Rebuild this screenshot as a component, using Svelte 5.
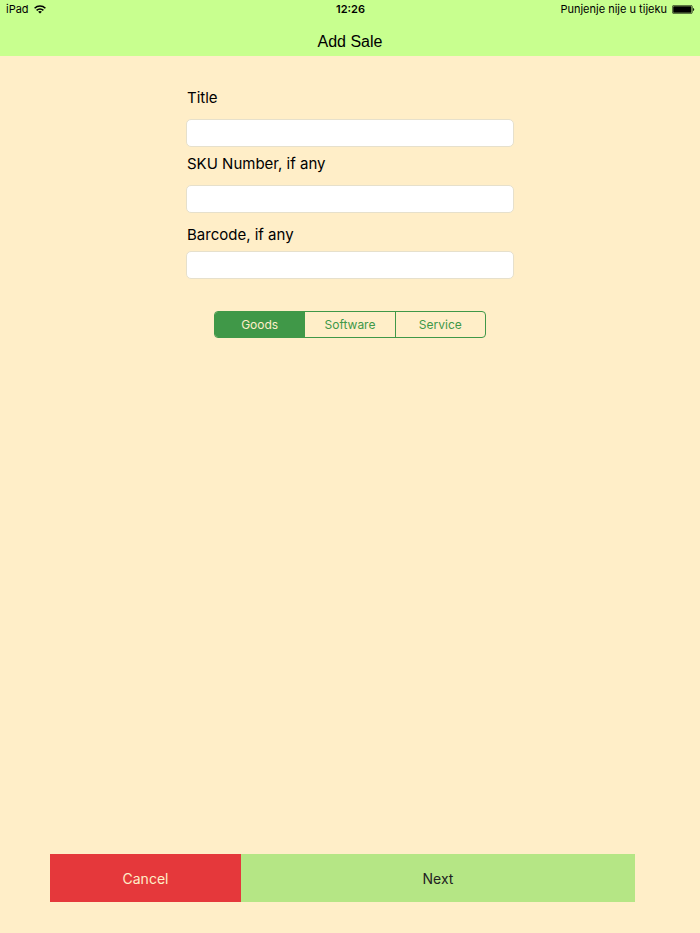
<script>
  const types = ['Goods', 'Software', 'Service']
  let selected = $state('Goods')
  let title = $state('')
  let sku = $state('')
  let barcode = $state('')

  function reset() {
    title = ''
    sku = ''
    barcode = ''
    selected = 'Goods'
  }
</script>

<div class="page">
  <header>
    <div class="status">
      <div class="left">
        <span>iPad</span>
        <svg width="12" height="9" viewBox="0 0 12 9" fill="none" stroke="#000" stroke-width="1.5" aria-hidden="true">
          <path d="M.6 3.3C3.6.3 8.4.3 11.4 3.3" />
          <path d="M2.6 5.4c1.9-1.9 4.9-1.9 6.8 0" />
          <path d="M6 8.6 4.1 6.7c1.1-1 2.7-1 3.8 0z" fill="#000" stroke="none" />
        </svg>
      </div>
      <div class="time">12:26</div>
      <div class="right">
        <span>Punjenje nije u tijeku</span>
        <svg width="23" height="9" viewBox="0 0 23 9" aria-hidden="true">
          <rect x=".4" y=".4" width="19.9" height="8.2" rx="1.4" fill="none" stroke="#000" stroke-width=".6" />
          <rect x="1.2" y="1.2" width="18.2" height="6.6" rx=".6" />
          <path d="M21.1 2.9c1.5.3 1.5 2.9 0 3.2z" />
        </svg>
      </div>
    </div>
    <h1>Add Sale</h1>
  </header>

  <main>
    <div class="field">
      <label for="title">Title</label>
      <input id="title" type="text" bind:value={title} />
    </div>
    <div class="field">
      <label for="sku">SKU Number, if any</label>
      <input id="sku" type="text" bind:value={sku} />
    </div>
    <div class="field low">
      <label for="barcode">Barcode, if any</label>
      <input id="barcode" type="text" bind:value={barcode} />
    </div>
    <div class="segments" role="group" aria-label="Sale type">
      {#each types as type}
        <button type="button" class:active={selected === type} aria-pressed={selected === type} onclick={() => selected = type}>{type}</button>
      {/each}
    </div>
  </main>

  <footer>
    <button type="button" class="cancel" onclick={reset}>Cancel</button>
    <button type="button" class="next">Next</button>
  </footer>
</div>

<style>
  :global(body) { margin: 0; background: #ffeec8; }
  .page { min-height: 100vh; display: flex; flex-direction: column; box-sizing: border-box; background: #ffeec8; color: #000; font-family: Inter, "Liberation Sans", sans-serif; }
  header { background: #c8ff8f; padding-bottom: 4px; }
  .status { display: grid; grid-template-columns: 1fr auto 1fr; align-items: center; height: 19px; padding: 0 5px 0 6px; font-size: 11px; line-height: 19px; }
  .left, .right { display: flex; align-items: center; gap: 5px; }
  .right { justify-content: flex-end; }
  .time { font-weight: 600; }
  svg { display: block; }
  h1 { margin: 0; padding-top: 13px; font-family: "Liberation Sans", Arial, sans-serif; font-size: 16px; font-weight: 400; line-height: 20px; text-align: center; }
  main { flex: 1; box-sizing: border-box; width: 90%; max-width: 328px; margin: 0 auto; padding-top: 25px; }
  .field { display: flex; flex-direction: column; gap: 10px; padding-top: 6px; }
  .field.low { gap: 5px; padding-top: 11px; }
  label { padding-left: 1px; font-size: 15px; line-height: 22px; }
  input { box-sizing: border-box; width: 100%; height: 28px; margin: 0; padding: 0 6px; border: 1px solid #e6e0cc; border-radius: 5px; background: #fff; font-family: inherit; font-size: 15px; outline: none; }
  input:focus { border-color: #409848; }
  button { margin: 0; padding: 0; border: none; font-family: inherit; cursor: pointer; }
  .segments { display: flex; box-sizing: border-box; height: 27px; margin: 32px 28px 0; border: 1px solid #409848; border-radius: 4px; overflow: hidden; }
  .segments button { flex: 1; background: none; color: #409848; font-size: 12px; }
  .segments button + button { border-left: 1px solid #409848; }
  .segments button.active { background: #409848; color: #ffeec8; }
  footer { display: flex; padding: 24px 65px 31px 50px; }
  footer button { height: 48px; font-size: 14px; }
  .cancel { flex: 191; background: #e5383b; color: #ffeec8; }
  .next { flex: 394; background: #b5e685; color: #222; }
</style>
